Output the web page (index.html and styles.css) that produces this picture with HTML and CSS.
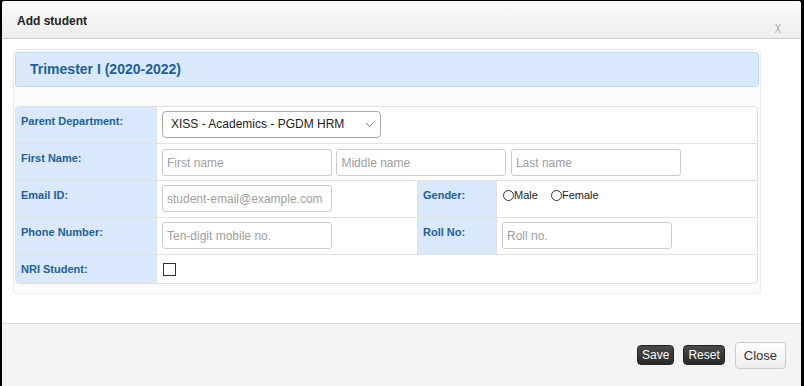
FILE: index.html
```html
<!DOCTYPE html>
<html lang="en">
<head>
  <meta charset="UTF-8" />
  <title>Add student</title>
  <link rel="stylesheet" href="styles.css">
</head>
<body>
  <div class="dialog">
    <div class="dialog-head">
      <span class="dialog-title">Add student</span>
      <span class="dialog-x">x</span>
    </div>
    <div class="dialog-body">
      <div class="panel">
        <div class="banner">Trimester I (2020-2022)</div>
        <table class="form-table">
          <colgroup>
            <col class="c-label">
            <col class="c-value">
            <col class="c-label2">
            <col class="c-value">
          </colgroup>
          <tr>
            <th>Parent Department:</th>
            <td colspan="3">
              <div class="select">XISS - Academics - PGDM HRM
                <svg class="chev" width="9" height="6" viewBox="0 0 9 6"><path d="M1 1l3.5 3.5L8 1" fill="none" stroke="#777" stroke-width="1"/></svg>
              </div>
            </td>
          </tr>
          <tr>
            <th>First Name:</th>
            <td colspan="3" class="names">
              <input type="text" placeholder="First name">
              <input type="text" placeholder="Middle name">
              <input type="text" placeholder="Last name">
            </td>
          </tr>
          <tr>
            <th>Email ID:</th>
            <td><input type="text" placeholder="student-email@example.com"></td>
            <th class="th2">Gender:</th>
            <td class="radios">
              <label><span class="radio"></span>Male</label>
              <label><span class="radio"></span>Female</label>
            </td>
          </tr>
          <tr>
            <th>Phone Number:</th>
            <td><input type="text" placeholder="Ten-digit mobile no."></td>
            <th class="th2">Roll No:</th>
            <td><input type="text" placeholder="Roll no."></td>
          </tr>
          <tr class="last">
            <th>NRI Student:</th>
            <td colspan="3"><span class="check"></span></td>
          </tr>
        </table>
      </div>
    </div>
    <div class="dialog-foot">
      <button class="btn-dark">Save</button>
      <button class="btn-dark">Reset</button>
      <button class="btn-light">Close</button>
    </div>
  </div>
</body>
</html>
```

FILE: styles.css
```css
html, body {
  margin: 0;
  padding: 0;
  background: #000;
  height: 100%;
}
body {
  font-family: "Liberation Sans", Arial, sans-serif;
  padding: 1px 3px 0 2px;
  box-sizing: border-box;
}
.dialog {
  background: #fff;
  height: 385px;
  display: flex;
  flex-direction: column;
  border-radius: 3px 3px 0 0;
  overflow: hidden;
}
.dialog-head {
  height: 37px;
  flex: none;
  background: linear-gradient(#fafafa, #eeeeee);
  border-bottom: 1px solid #cfcfcf;
  position: relative;
}
.dialog-title {
  position: absolute;
  left: 15px;
  top: 13px;
  font-size: 12px;
  font-weight: bold;
  color: #222;
}
.dialog-x {
  position: absolute;
  right: 19px;
  top: 21px;
  font-size: 12px;
  color: #aaa;
  text-transform: uppercase;
  transform: scaleX(0.8);
}
.dialog-body {
  flex: 1;
  padding: 10px 0 0 11px;
  border-bottom: 1px solid #dcdcdc;
}
.panel {
  width: 744px;
  height: 239px;
  padding: 2px 1px;
  border: 1px solid #eeeaea;
  border-radius: 4px;
  background: #fcfafa;
}
.banner {
  height: 33px;
  line-height: 33px;
  padding-left: 14px;
  background: #d9e8fb;
  border: 1px solid #b9ddf0;
  border-radius: 3px;
  color: #22609a;
  font-size: 14px;
  font-weight: bold;
}
.form-table {
  margin-top: 19px;
  width: 743px;
  border-collapse: separate;
  border-spacing: 0;
  border: 1px solid #e0e0e0;
  border-radius: 4px;
  background: #fff;
  overflow: hidden;
  table-layout: fixed;
}
.c-label { width: 141px; }
.c-value { width: 260px; }
.c-label2 { width: 80px; }
.form-table th,
.form-table td {
  border-bottom: 1px solid #e0e0e0;
  vertical-align: top;
  text-align: left;
  height: 37px;
  box-sizing: border-box;
}
.form-table tr.last th,
.form-table tr.last td {
  border-bottom: none;
  height: 28px;
}
.form-table th {
  background: #d9e8fb;
  color: #22609a;
  font-size: 11px;
  padding: 8px 0 0 5px;
  border-right: 1px solid #e0e0e0;
}
.form-table th.th2 {
  border-left: 1px solid #e0e0e0;
}
.form-table td {
  padding: 4px 5px 0 5px;
}
.form-table td.names {
  padding-top: 5px;
}
input[type="text"] {
  width: 170px;
  height: 27px;
  box-sizing: border-box;
  border: 1px solid #cccccc;
  border-radius: 3px;
  padding: 0 4px;
  font-family: "Liberation Sans", Arial, sans-serif;
  font-size: 12px;
  margin: 0;
  vertical-align: top;
}
input::placeholder {
  color: #a0a0a0;
}
.select {
  width: 219px;
  height: 27px;
  box-sizing: border-box;
  border: 1px solid #aaa;
  border-radius: 4px;
  font-size: 12px;
  line-height: 25px;
  padding-left: 8px;
  color: #222;
  position: relative;
  background: #fff;
}
.chev {
  position: absolute;
  right: 6px;
  top: 10px;
}
.radios {
  font-size: 11px;
  color: #222;
}
.form-table td.radios {
  padding-top: 8px;
}
.radios label {
  display: inline-flex;
  align-items: center;
  margin-right: 9px;
}
.radio {
  width: 11px;
  height: 11px;
  border: 1px solid #333;
  border-radius: 50%;
  box-sizing: border-box;
  margin-left: 1px;
}
.check {
  display: inline-block;
  width: 13px;
  height: 13px;
  box-sizing: border-box;
  border: 1px solid #333;
  margin-top: 4px;
  margin-left: 1px;
}
.dialog-foot {
  height: 62px;
  background: #f4f4f4;
  display: flex;
  justify-content: flex-end;
  align-items: center;
  gap: 9px;
  padding-right: 15px;
}
.btn-dark {
  height: 20px;
  padding: 0 4px;
  background: linear-gradient(#4a4a4a, #2a2a2a);
  color: #fff;
  border: 1px solid #222;
  border-radius: 4px;
  font-family: "Liberation Sans", Arial, sans-serif;
  font-size: 12px;
  line-height: 18px;
}
.btn-light {
  height: 27px;
  padding: 0 8px;
  margin-left: 1px;
  background: linear-gradient(#ffffff, #ececec);
  color: #333;
  border: 1px solid #cccccc;
  border-radius: 4px;
  font-family: "Liberation Sans", Arial, sans-serif;
  font-size: 13px;
}
```
